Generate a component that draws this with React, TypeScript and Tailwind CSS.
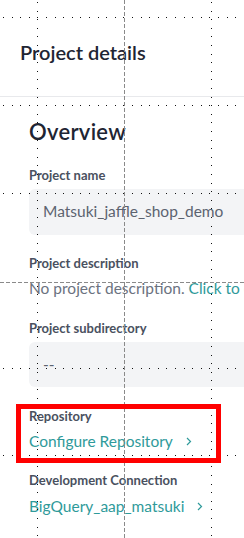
import React from "react";

function Chevron() {
  return (
    <svg width="6" height="9" viewBox="0 0 6 9" className="ml-[13px] shrink-0">
      <path d="M1 1 L4.5 4.5 L1 8" fill="none" stroke="#2f9a9a" strokeWidth="1.2" />
    </svg>
  );
}

function Overlay() {
  const hDots = [17, 105, 193, 368, 455];
  const vDots = [37, 211];
  return (
    <svg
      className="absolute left-0 top-0 pointer-events-none"
      width="244"
      height="538"
      viewBox="0 0 244 538"
      shapeRendering="crispEdges"
    >
      {hDots.map((y) => (
        <line key={"h" + y} x1="3" y1={y + 0.5} x2="244" y2={y + 0.5} stroke="#111" strokeWidth="1" strokeDasharray="1 7.6" />
      ))}
      {vDots.map((x) => (
        <line key={"v" + x} x1={x + 0.5} y1="2" x2={x + 0.5} y2="538" stroke="#111" strokeWidth="1" strokeDasharray="1 7.6" />
      ))}
      <line x1="0" y1="282.5" x2="244" y2="282.5" stroke="#8a8a8a" strokeWidth="1" strokeDasharray="4 2" />
      <line x1="124.5" y1="0" x2="124.5" y2="538" stroke="#8a8a8a" strokeWidth="1" strokeDasharray="4 2" />
    </svg>
  );
}

export default function App() {
  return (
    <div className="relative w-[244px] h-[538px] overflow-hidden bg-white [font-family:Lato,'Noto_Sans',sans-serif]">
      <div className="h-[97px] border-b border-[#e8e9ec] pl-[20px] pt-[38px]">
        <h1 className="text-[20px] leading-[28px] font-semibold text-[#1e2533] whitespace-nowrap">Project details</h1>
      </div>
      <div className="w-[340px] pl-[29px] flex flex-col">
        <h2 className="mt-[21px] text-[22px] leading-[28px] font-semibold text-[#1e2533] tracking-[0.3px]">Overview</h2>

        <div className="mt-[20px] text-[13px] leading-[18px] font-bold text-[#4a5160]">Project name</div>
        <div className="mt-[5px] h-[46px] rounded-[6px] bg-[#f3f4f6] flex items-center pl-[14px] text-[15.5px] text-[#5c6370]">
          Matsuki_jaffle_shop_demo
        </div>

        <div className="mt-[19px] text-[13px] leading-[18px] font-bold text-[#4a5160]">Project description</div>
        <div className="mt-[4px] text-[15.5px] leading-[24px] whitespace-nowrap text-[#6b7280]">
          No project description. <span className="text-[#2f9a9a]">Click to edit</span>
        </div>

        <div className="mt-[19px] text-[13px] leading-[18px] font-bold text-[#4a5160]">Project subdirectory</div>
        <div className="mt-[5px] h-[45px] rounded-[6px] bg-[#f3f4f6] flex items-center pl-[14px] text-[15.5px] text-[#5c6370]">
          --
        </div>

        <div className="mt-[20px] text-[13px] leading-[18px] font-bold text-[#4a5160]">Repository</div>
        <div className="mt-[4px] flex items-center text-[15.5px] leading-[24px] text-[#2f9a9a]">
          Configure Repository
          <Chevron />
        </div>

        <div className="mt-[18px] text-[13px] leading-[18px] font-bold text-[#4a5160]">Development Connection</div>
        <div className="mt-[5px] flex items-center text-[15.5px] leading-[24px] text-[#2f9a9a]">
          BigQuery_aap_matsuki
          <Chevron />
        </div>
      </div>

      <Overlay />
      <div className="absolute left-[16px] top-[404px] w-[205px] h-[59px] border-[5px] border-[#ff0000] pointer-events-none" />
    </div>
  );
}
